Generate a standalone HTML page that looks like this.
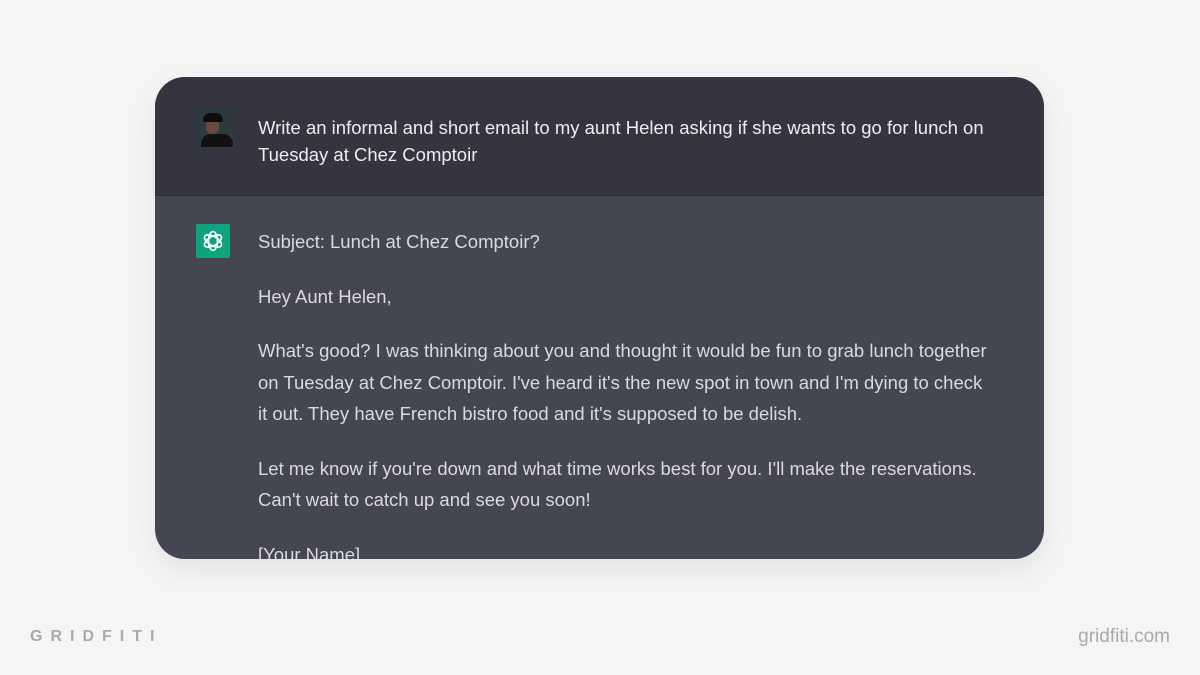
<!DOCTYPE html><html><head><style>
body{margin:0;width:1200px;height:675px;background:#f5f5f5;font-family:"Liberation Sans",sans-serif;position:relative;overflow:hidden}
.card{position:absolute;left:155px;top:77px;width:889px;height:482px;border-radius:30px;overflow:hidden;background:#444654;box-shadow:0 10px 30px rgba(0,0,0,0.08)}
.top{position:absolute;left:0;top:0;width:100%;height:118px;background:#343541;border-bottom:1px solid #2b2c36}
.t{position:absolute;left:103px;color:#ececf1;font-size:18.5px;white-space:nowrap}
.av{position:absolute;left:40px;top:31px;width:38px;height:39px;border-radius:3px;background:#2c3b3f;overflow:hidden}
.gp{position:absolute;left:41px;top:147px;width:34px;height:34px;border-radius:2px;background:#10a37f}
p{margin:0}
</style></head><body>
<div class="card">
<div class="top">
<div class="av"><div style="position:absolute;left:6px;top:26px;width:32px;height:20px;border-radius:10px 10px 0 0;background:#111"></div><div style="position:absolute;left:11px;top:10px;width:13px;height:16px;border-radius:6px;background:#6b4a3a"></div><div style="position:absolute;left:8px;top:5px;width:20px;height:9px;border-radius:10px 10px 3px 3px;background:#0c0c0c"></div></div>
<div class="t" style="top:37px;line-height:27px">Write an informal and short email to my aunt Helen asking if she wants to go for lunch on<br>Tuesday at Chez Comptoir</div>
</div>
<div class="gp"><svg width="34" height="34" viewBox="0 0 34 34" fill="none" stroke="#fff" stroke-width="1.6"><g transform="translate(17 17)"><ellipse rx="4.5" ry="9.5" transform="rotate(0)"/><ellipse rx="4.5" ry="9.5" transform="rotate(60)"/><ellipse rx="4.5" ry="9.5" transform="rotate(120)"/></g></svg></div>
<div class="t" style="top:149px;line-height:31.5px;color:#d9d9e3">
<p>Subject: Lunch at Chez Comptoir?</p>
<p style="margin-top:23px">Hey Aunt Helen,</p>
<p style="margin-top:23px">What's good? I was thinking about you and thought it would be fun to grab lunch together<br>on Tuesday at Chez Comptoir. I've heard it's the new spot in town and I'm dying to check<br>it out. They have French bistro food and it's supposed to be delish.</p>
<p style="margin-top:23px">Let me know if you're down and what time works best for you. I'll make the reservations.<br>Can't wait to catch up and see you soon!</p>
<p style="margin-top:23px">[Your Name]</p>
</div>
</div>
<div style="position:absolute;left:30px;top:628px;font-size:16px;font-weight:bold;letter-spacing:8px;color:#aaa">GRIDFITI</div>
<div style="position:absolute;right:30px;top:626px;font-size:19px;color:#aaa">gridfiti.com</div>
</body></html>
